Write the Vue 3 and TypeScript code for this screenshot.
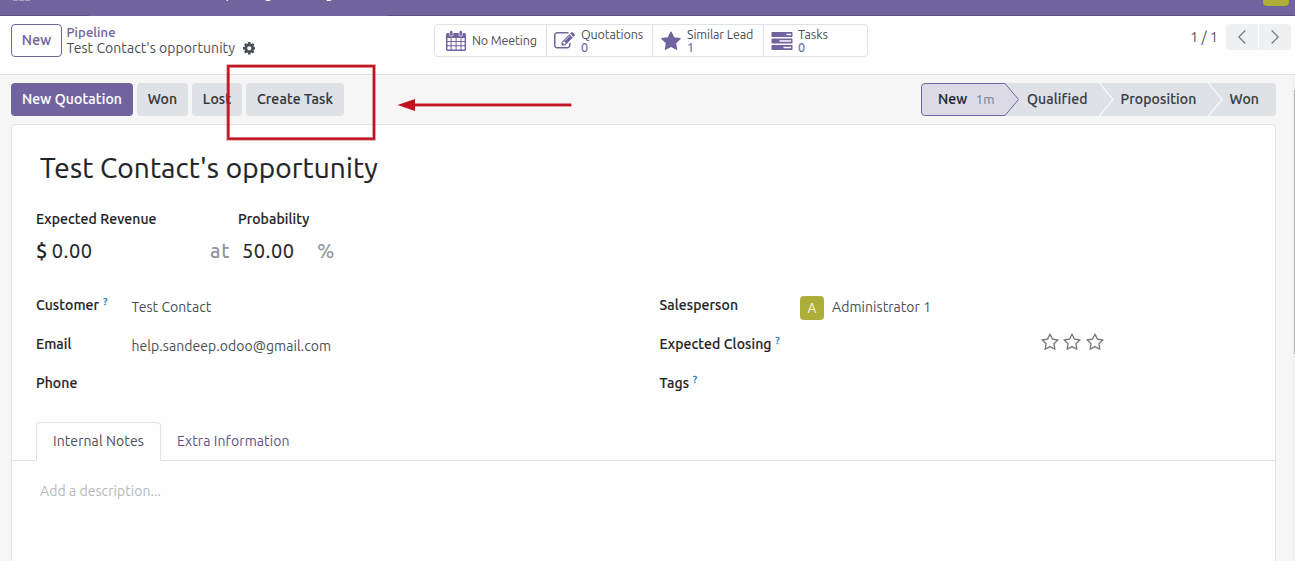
<script setup lang="ts">
interface Stat { icon: 'calendar' | 'edit' | 'star' | 'tasks'; label: string; value?: string; cls: string }
interface Field { label: string; help?: boolean; value?: string; avatar?: boolean; cls: string }

const stats: Stat[] = [
  { icon: 'calendar', label: 'No Meeting', cls: 's-meet' },
  { icon: 'edit', label: 'Quotations', value: '0', cls: 's-quot' },
  { icon: 'star', label: 'Similar Lead', value: '1', cls: 's-lead' },
  { icon: 'tasks', label: 'Tasks', value: '0', cls: 's-task' },
]
const left: Field[] = [
  { label: 'Customer', help: true, value: 'Test Contact', cls: 'f-cust' },
  { label: 'Email', value: 'help.sandeep.odoo@gmail.com', cls: 'f-mail' },
  { label: 'Phone', cls: 'f-phone' },
]
const right: Field[] = [
  { label: 'Salesperson', value: 'Administrator 1', avatar: true, cls: 'f-sales' },
  { label: 'Expected Closing', help: true, cls: 'f-close' },
  { label: 'Tags', help: true, cls: 'f-tags' },
]
const starPath = 'M1664 647q0 22-26 48l-363 354 86 500q1 7 1 20 0 21-10.500 35.500t-30.500 14.500q-19 0-40-12l-449-236-449 236q-22 12-40 12-21 0-31.500-14.500t-10.500-35.500q0-6 2-20l86-500-364-354q-25-27-25-48 0-37 56-46l502-73 225-455q19-41 49-41t49 41l225 455 502 73q56 9 56 46z'
const starHole = 'M1137 1004l306-297-422-62-189-382-189 382-422 62 306 297-73 421 378-199 377 199z'
</script>

<template>
  <div class="screen">
    <header class="navbar">
      <div class="apps"><i></i><i></i><i></i></div>
      <nav class="menu"><span class="m1">Reporting</span><span class="m2">Configuration</span></nav>
      <div class="user"></div>
    </header>

    <section class="panel">
      <button class="btn outline"><span class="t-new">New</span></button>
      <div class="crumbs">
        <a class="t-pipe">Pipeline</a>
        <div class="current">
          <span class="t-crumb">Test Contact's opportunity</span>
          <svg class="gear" viewBox="0 0 1536 1536"><path fill-rule="evenodd" d="M1024 768q0-106-75-181t-181-75-181 75-75 181 75 181 181 75 181-75 75-181zm512-109v222q0 12-8 23t-20 13l-185 28q-19 54-39 91 35 50 107 138 10 12 10 25t-9 23q-27 37-99 108t-94 71q-12 0-26-9l-138-108q-44 23-91 38-16 136-29 186-7 28-36 28h-222q-14 0-24.500-8.500t-11.500-21.500l-28-184q-49-16-90-37l-141 107q-10 9-25 9-14 0-25-11-126-114-165-168-7-10-7-23 0-12 8-23 15-21 51-66.500t54-70.500q-27-50-41-99l-183-27q-13-2-21-12.500t-8-23.500v-222q0-12 8-23t19-13l186-28q14-46 39-92-40-57-107-138-10-12-10-24 0-10 9-23 26-36 98.500-107.500t94.500-71.500q13 0 26 10l138 107q44-23 91-38 16-136 29-186 7-28 36-28h222q14 0 24.500 8.500t11.500 21.500l28 184q49 16 90 37l142-107q9-9 24-9 13 0 25 10 129 119 165 170 7 8 7 22 0 12-8 23-15 21-51 66.500t-54 70.500q26 50 41 98l183 28q13 2 21 12.500t8 23.500z"/></svg>
        </div>
      </div>

      <div class="stats">
        <div v-for="s in stats" :key="s.icon" class="stat" :class="s.cls">
          <svg v-if="s.icon === 'calendar'" class="ico cal" viewBox="0 0 20 21">
            <path fill-rule="evenodd" d="M1.500 3H18.500Q20 3 20 4.500V19.500Q20 21 18.500 21H1.500Q0 21 0 19.500V4.500Q0 3 1.500 3ZM1.500 8V11H4.600V8ZM5.600 8V11H9.600V8ZM10.600 8V11H14.500V8ZM15.500 8V11H18.600V8ZM1.500 12V15.300H4.600V12ZM5.600 12V15.300H9.600V12ZM10.600 12V15.300H14.500V12ZM15.500 12V15.300H18.600V12ZM1.500 16.300V19.600H4.600V16.300ZM5.600 16.300V19.600H9.600V16.300ZM10.600 16.300V19.600H14.500V16.300ZM15.500 16.300V19.600H18.600V16.300Z"/>
            <rect x="3.500" y=".5" width="3.400" height="5.500" rx="1.500" class="ring"/><rect x="13.100" y=".5" width="3.400" height="5.500" rx="1.500" class="ring"/>
          </svg>
          <svg v-else-if="s.icon === 'edit'" class="ico edit" viewBox="0 0 1792 1536">
            <path fill-rule="evenodd" d="M888 1056l116-116-152-152-116 116v56h96v96h56zm440-720q-16-16-33 1l-350 350q-17 17-1 33t33-1l350-350q17-17 1-33zm80 594v190q0 119-84.500 203.500t-203.500 84.500h-832q-119 0-203.500-84.500t-84.500-203.500v-832q0-119 84.500-203.500t203.500-84.500h832q63 0 117 25 15 7 18 23 3 17-9 29l-49 49q-14 14-32 8-23-6-45-6h-832q-66 0-113 47t-47 113v832q0 66 47 113t113 47h832q66 0 113-47t47-113v-126q0-13 9-22l64-64q15-15 35-7t20 29zm-96-738l288 288-672 672h-288v-288zm444 132l-92 92-288-288 92-92q28-28 68-28t68 28l152 152q28 28 28 68t-28 68z"/>
          </svg>
          <svg v-else-if="s.icon === 'star'" class="ico star" viewBox="0 0 1664 1620"><path :d="starPath"/></svg>
          <svg v-else class="ico tasks" viewBox="0 0 21 18">
            <path fill-rule="evenodd" d="M.7 0H20.300Q21 0 21 .7V4.300Q21 5 20.300 5H.7Q0 5 0 4.300V.7Q0 0 .7 0ZM15 1.700V3.300H19.600V1.700ZM.7 6.500H20.300Q21 6.500 21 7.200V10.800Q21 11.500 20.300 11.500H.7Q0 11.500 0 10.800V7.200Q0 6.500 .7 6.500ZM8 8.200V9.800H19.600V8.200ZM.7 13H20.300Q21 13 21 13.700V17.300Q21 18 20.300 18H.7Q0 18 0 17.300V13.700Q0 13 .7 13ZM12 14.700V16.300H19.600V14.700Z"/>
          </svg>
          <div class="stat-text">
            <span class="stat-label">{{ s.label }}</span>
            <span v-if="s.value" class="stat-value">{{ s.value }}</span>
          </div>
        </div>
      </div>

      <div class="pager">
        <span class="count">1 / 1</span>
        <button class="page first"><svg viewBox="0 0 8 14"><path d="M7.300.5.800 7l6.500 6.500"/></svg></button>
        <button class="page last"><svg viewBox="0 0 8 14"><path d="M.7.5 7.200 7 .7 13.500"/></svg></button>
      </div>
    </section>

    <main class="content">
      <div class="statusbar">
        <div class="actions">
          <button class="btn primary"><span class="t-quote">New Quotation</span></button>
          <button class="btn b-won"><span>Won</span></button>
          <button class="btn b-lost"><span>Lost</span></button>
          <button class="btn b-create"><span class="t-create">Create Task</span></button>
        </div>
        <div class="stages">
          <svg class="stage-shape" viewBox="0 0 355 33">
            <path class="stage-bg" d="M80 0H351Q355 0 355 4V29Q355 33 351 33H80Z"/>
            <path class="stage-on" d="M4 .5H84L97.500 16.500 84 32.500H4Q.5 32.500 .5 29V4Q.5 .5 4 .5Z"/>
            <path class="stage-sep" d="M178.500 0 192 16.500 178.500 33M287.500 0 301 16.500 287.500 33"/>
          </svg>
          <span class="stage g1">New<small>1m</small></span>
          <span class="stage g2">Qualified</span>
          <span class="stage g3">Proposition</span>
          <span class="stage g4">Won</span>
        </div>
      </div>

      <article class="sheet">
        <h1><span>Test Contact's opportunity</span></h1>
        <div class="figures">
          <div class="fig-rev">
            <label class="t-rev">Expected Revenue</label>
            <div class="amount"><b>$</b><span>0.00</span></div>
          </div>
          <span class="at">at</span>
          <div class="fig-prob">
            <label class="t-prob">Probability</label>
            <div class="amount"><span class="pv">50.00</span><em>%</em></div>
          </div>
        </div>

        <div class="groups">
          <div class="group">
            <div v-for="f in left" :key="f.label" class="field" :class="f.cls">
              <label><span>{{ f.label }}</span><sup v-if="f.help">?</sup></label>
              <div class="value"><span>{{ f.value }}</span></div>
            </div>
          </div>
          <div class="group second">
            <div v-for="f in right" :key="f.label" class="field" :class="f.cls">
              <label><span>{{ f.label }}</span><sup v-if="f.help">?</sup></label>
              <div class="value"><i v-if="f.avatar" class="avatar">A</i><span>{{ f.value }}</span></div>
              <div v-if="f.cls === 'f-close'" class="priority">
                <svg v-for="n in 3" :key="n" viewBox="0 0 1664 1620"><path fill-rule="evenodd" :d="starHole + starPath"/></svg>
              </div>
            </div>
          </div>
        </div>

        <div class="tabs">
          <a class="tab active"><span>Internal Notes</span></a>
          <a class="tab"><span>Extra Information</span></a>
        </div>
        <p class="placeholder"><span>Add a description...</span></p>
      </article>
      <div class="scroll"><i></i></div>
    </main>

    <svg class="annotation" viewBox="0 0 1295 561">
      <rect x="228.200" y="66.100" width="145.800" height="72.700" class="halo"/>
      <rect x="228.200" y="66.100" width="145.800" height="72.700" class="line"/>
      <path d="M412 104.900H571.300" class="halo"/><path d="M412 104.900H571.300" class="line"/>
      <path d="M397.500 105 415 99V111Z" class="head"/>
    </svg>
  </div>
</template>

<style>
body { margin: 0; overflow: hidden; }
</style>

<style scoped>
* { box-sizing: border-box; }
.screen { position: relative; width: 1295px; height: 561px; overflow: hidden; display: flex; flex-direction: column; font: 14px/21px Ubuntu, "Noto Sans", "Open Sans", sans-serif; letter-spacing: .06px; color: #4a4f56; background: #fefefe; }
.screen span { white-space: nowrap; }
button { font: inherit; letter-spacing: inherit; border: 0; padding: 0; margin: 0; }
.navbar { height: 16px; flex: none; background: linear-gradient(90deg, #5a4f7f 89px, #71639e 89px, #71639e 388px, #5a4f7f 388px) 0 15px / 100% 1px no-repeat #71639e; display: flex; padding-left: 13px; overflow: hidden; }
.apps { display: flex; gap: 1px; width: 196px; }
.apps i { width: 5px; height: 1px; background: #a79fc4; }
.menu { display: flex; color: #fff; margin-top: -17px; height: 20px; line-height: 20px; }
.m1 { width: 82px; }
.user { width: 26px; height: 6px; margin-left: auto; margin-right: 6px; background: #acae37; border-radius: 0 0 4px 4px; }

.panel { height: 59px; flex: none; border-bottom: 1px solid #dcdfe3; display: flex; align-items: flex-start; padding: 8px 4px 0 11px; }
.btn { height: 33px; border-radius: 4px; background: #dee1e6; color: #2f353b; font-weight: 500; letter-spacing: .14px; -webkit-text-stroke: .15px; display: flex; align-items: center; justify-content: center; }
.outline { flex: none; width: 51px; background: #fff; border: 1px solid #71639e; color: #71639e; }
.crumbs { flex: none; width: 371px; padding: 1px 0 0 4.500px; line-height: 15.500px; }
.crumbs a { display: block; color: #71639e; font-size: 13px; font-weight: 500; letter-spacing: .13px; -webkit-text-stroke: .1px; }
.current { display: flex; align-items: center; gap: 7px; }
.gear { width: 12.500px; height: 12.500px; fill: #4a4f56; }
.t-crumb { width: 169px; letter-spacing: .06px; }
.stats { flex: none; width: 434px; margin-left: 1px; height: 33px; border: 1px solid #dee1e6; border-radius: 4px; display: flex; }
.stat { flex: none; display: flex; align-items: center; border-right: 1px solid #dee1e6; font-size: 12.500px; line-height: 13px; letter-spacing: -.13px; }
.stat:last-child { border: 0; }
.s-meet { width: 112px; padding-left: 11px; gap: 6px; }
.s-quot { width: 106px; padding-left: 7px; gap: 6px; }
.s-lead { width: 111px; padding-left: 8px; gap: 6px; }
.s-task { padding-left: 7px; gap: 5px; letter-spacing: -.05px; }
.ico { fill: #71639e; flex: none; }
.cal { width: 20px; height: 21px; }
.ring { stroke: #fff; stroke-width: .7; }
.edit { width: 21px; height: 18px; }
.star { width: 20px; height: 19px; }
.tasks { width: 22px; height: 18px; }
.stat-text { display: flex; flex-direction: column; }
.stat-value { color: #71639e; -webkit-text-stroke: .2px; }
.pager { margin-left: auto; display: flex; }
.count { line-height: 27px; margin-right: 8px; }
.page { width: 32px; height: 26px; background: #eff0f2; display: flex; align-items: center; justify-content: center; }
.page svg { width: 8px; height: 14px; fill: none; stroke: #777b81; stroke-width: 1.300; }
.first { border-radius: 4px 0 0 4px; }
.last { border-radius: 0 4px 4px 0; margin-left: 1px; }

.content { position: relative; flex: 1; background: #f6f6f7; padding: 8px 19px 0 11px; }
.statusbar { display: flex; justify-content: space-between; height: 33px; }
.actions { display: flex; gap: 4px; }
.primary { width: 122px; background: #71639e; color: #fff; }
.b-won { width: 51px; }
.b-lost { width: 50px; }
.b-create { width: 98px; }
.stages { position: relative; width: 355px; height: 33px; display: flex; line-height: 32px; font-weight: 500; letter-spacing: .12px; -webkit-text-stroke: .15px; color: #373d43; }
.stage-shape { position: absolute; inset: 0; width: 355px; height: 33px; }
.stage-bg { fill: #dee1e6; }
.stage-on { fill: #dddae8; stroke: #71639e; }
.stage-sep { fill: none; stroke: #f8f8f9; stroke-width: 1.200; }
.stage { position: relative; }
.g1 { width: 106px; padding-left: 17px; color: #21252a; }
.g1 small { font-size: 13px; font-weight: 400; color: #83858e; margin-left: 8.500px; }
.g2 { width: 93.500px; }
.g3 { width: 109px; }

.sheet { margin-top: 8px; height: 460px; border: 1px solid #dee1e6; border-radius: 4px; background: #fefefe; padding: 24px 0 0; }
h1 { margin: 0; padding-left: 28px; height: 40px; font-size: 28px; line-height: 38px; font-weight: 400; letter-spacing: .15px; -webkit-text-stroke: .2px; color: #1f2429; }
.figures { display: flex; padding: 20px 0 0 24px; height: 106px; }
label { color: #1f2429; font-weight: 500; letter-spacing: .1px; -webkit-text-stroke: .15px; }
.figures label { display: block; height: 21px; }
.fig-rev { width: 174px; }
.amount { display: flex; font-size: 20px; line-height: 26px; padding-top: 8px; letter-spacing: .5px; -webkit-text-stroke: .2px; color: #1f2429; }
.amount b { font-weight: 500; margin-right: 4px; }
.at { width: 28px; padding-top: 29px; font-size: 20px; line-height: 26px; letter-spacing: .8px; color: #929498; font-weight: 500; }
.pv { width: 75px; margin-left: 4px; }
.amount em { font-style: normal; font-size: 20.700px; color: #929498; }
.groups { display: flex; padding-left: 24px; height: 127px; }
.group { flex: none; width: 623.500px; }
.field { display: flex; height: 39px; }
.field label { flex: none; width: 95.500px; display: flex; }
.second .field label { width: 140.500px; }
sup { font-size: 10px; line-height: 13px; color: #2379b5; margin-left: 4px; font-weight: 500; -webkit-text-stroke: .3px #2379b5; }
.value { display: flex; padding-top: 2px; }
.avatar { width: 24px; height: 24px; margin: -1px 8px 0 0; border-radius: 4px; background: #acae37; color: #f2f2dc; font: 13px/25px Lato, sans-serif; text-align: center; }
.priority { margin: -1px 0 0 240.500px; display: flex; gap: 4.700px; }
.priority svg { width: 18px; height: 17px; fill: #777b81; }
.tabs { display: flex; height: 39px; padding-left: 24px; border-bottom: 1px solid #dee1e6; letter-spacing: .09px; }
.tab { height: 39px; padding: 0 16px; line-height: 38px; color: #5f5285; }
.tab.active { width: 125px; border: 1px solid #dee1e6; border-bottom-color: #fefefe; border-radius: 4px 4px 0 0; background: #fefefe; line-height: 37px; color: #4a4f56; }
.placeholder { margin: 20px 0 0 28px; color: #b5b7ba; letter-spacing: .06px; }
.scroll { position: absolute; top: 0; right: 0; width: 3px; height: 486px; background: #f1f1f1; padding: 15px 0 0 2px; }
.scroll i { display: block; height: 264px; background: #b3b3b3; }
.annotation { position: absolute; inset: 0; width: 1295px; height: 561px; pointer-events: none; }
.halo { fill: none; stroke: #c1121f; stroke-opacity: .5; stroke-width: 3.600; }
.line { fill: none; stroke: #c1121f; stroke-width: 2; }
.head { fill: #c1121f; }
</style>
